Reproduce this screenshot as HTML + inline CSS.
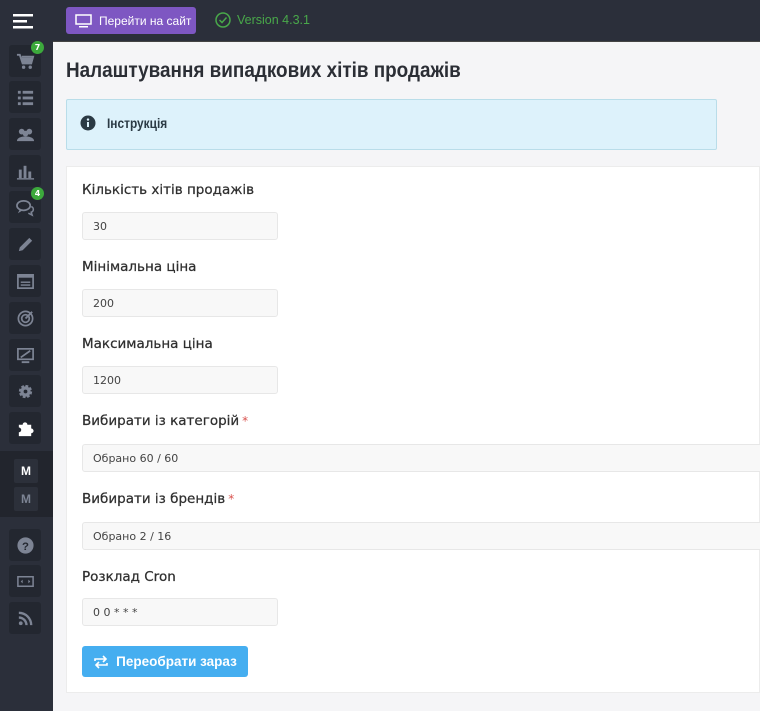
<!DOCTYPE html>
<html><head><meta charset="utf-8"><style>
*{box-sizing:border-box;margin:0;padding:0}
body{width:760px;height:711px;overflow:hidden;background:#f5f5f7;font-family:"DejaVu Sans","Liberation Sans",sans-serif;position:relative}
.side{position:absolute;left:0;top:0;width:53px;height:711px;background:#2b2f3a}
.top{position:absolute;left:53px;top:0;right:0;height:42px;background:#2b2f3a;border-bottom:1px solid #444}
.btn{position:absolute;left:9px;width:32px;height:32px;background:#232730;border-radius:3px;display:flex;align-items:center;justify-content:center}
.btn svg{width:19px;height:19px;fill:#7d8494}
.badge{position:absolute;right:-3px;top:-4px;width:13px;height:13px;border-radius:50%;background:#3ca93c;color:#fff;font-size:8px;font-weight:bold;display:flex;align-items:center;justify-content:center}
.band{position:absolute;left:0;top:451px;width:53px;height:66px;background:#22252d}
.m{position:absolute;left:14px;width:24px;height:24px;background:#2c303a;border-radius:2px;color:#fff;font:bold 12px "Liberation Sans",sans-serif;display:flex;align-items:center;justify-content:center}
h1{position:absolute;left:66px;top:59px;font:bold 21px "Liberation Sans",sans-serif;color:#2b2e35;transform:scaleX(0.9);transform-origin:0 0;white-space:nowrap}
.info{position:absolute;left:66px;top:99px;width:651px;height:51px;background:#ddf2fb;border:1px solid #b9dde9;border-radius:2px}
.card{position:absolute;left:66px;top:166px;right:0;height:527px;background:#fff;border:1px solid #ececec}
.lbl{position:absolute;left:82px;font-size:13.5px;color:#2f2f2f;font-family:"DejaVu Sans",sans-serif;white-space:nowrap;-webkit-text-stroke:0.25px #2f2f2f}
.lbl b{color:#d9534f;font-weight:normal;font-size:12px;margin-left:3px;-webkit-text-stroke:0}
.inp{position:absolute;left:82px;width:196px;height:28px;background:#f8f8f8;border:1px solid #e7e7e7;border-radius:3px;font-size:11px;color:#444;padding:7px 10px;white-space:nowrap}
.wide{width:690px}
.go{position:absolute;left:82px;top:646px;width:166px;height:31px;background:#45aef0;border-radius:3px;color:#fff;font:bold 13.5px "Liberation Sans",sans-serif;display:flex;align-items:center;justify-content:center;gap:7px}
</style></head><body>
<div class="side">
 <svg style="position:absolute;left:13px;top:13px" width="20" height="16" viewBox="0 0 20 16"><rect x="0" y="1" width="20" height="2.5" fill="#fff"/><rect x="0" y="7" width="14" height="2.5" fill="#fff"/><rect x="0" y="13" width="20" height="2.5" fill="#fff"/></svg>
 <div class="btn" style="top:45px"><svg viewBox="0 0 20 20"><path d="M1 3h3l3 9h9l2-7H6" fill="none" stroke="#7d8494" stroke-width="2"/><path d="M6 6h12l-2 6H7z"/><circle cx="8" cy="16" r="1.8"/><circle cx="15" cy="16" r="1.8"/></svg><div class="badge">7</div></div>
 <div class="btn" style="top:81px"><svg viewBox="0 0 20 20"><rect x="2" y="3" width="3" height="3"/><rect x="7" y="3" width="11" height="3"/><rect x="2" y="9" width="3" height="3"/><rect x="7" y="9" width="11" height="3"/><rect x="2" y="15" width="3" height="3"/><rect x="7" y="15" width="11" height="3"/></svg></div>
 <div class="btn" style="top:118px"><svg viewBox="0 0 20 20"><circle cx="6" cy="7" r="3"/><circle cx="14" cy="7" r="3"/><circle cx="10" cy="9" r="3"/><path d="M1 17c0-5 9-5 9-5s9 0 9 5z"/></svg></div>
 <div class="btn" style="top:155px"><svg viewBox="0 0 20 20"><rect x="3" y="8" width="3" height="9"/><rect x="8" y="4" width="3" height="13"/><rect x="13" y="10" width="3" height="7"/><rect x="1" y="17" width="18" height="1.5"/></svg></div>
 <div class="btn" style="top:191px"><svg viewBox="0 0 20 20"><ellipse cx="8" cy="8" rx="7" ry="5" fill="none" stroke="#7d8494" stroke-width="1.8"/><path d="M4 12l-2 4 5-3z"/><path d="M16 9c3 1 3 5 0 6l1 3-4-2" fill="none" stroke="#7d8494" stroke-width="1.6"/></svg><div class="badge">4</div></div>
 <div class="btn" style="top:228px"><svg viewBox="0 0 20 20"><path d="M3 17l1-4L14 3l3 3L7 16z"/></svg></div>
 <div class="btn" style="top:265px"><svg viewBox="0 0 20 20"><rect x="2" y="3" width="16" height="14" fill="none" stroke="#7d8494" stroke-width="1.8"/><rect x="2" y="3" width="16" height="3"/><rect x="5" y="10" width="10" height="1.5"/><rect x="5" y="13" width="10" height="1.5"/></svg></div>
 <div class="btn" style="top:302px"><svg viewBox="0 0 20 20"><circle cx="10" cy="10" r="7.5" fill="none" stroke="#7d8494" stroke-width="1.8"/><circle cx="10" cy="10" r="4" fill="none" stroke="#7d8494" stroke-width="1.8"/><path d="M10 10l7-7" stroke="#7d8494" stroke-width="2"/></svg></div>
 <div class="btn" style="top:339px"><svg viewBox="0 0 20 20"><rect x="2" y="3" width="16" height="11" fill="none" stroke="#7d8494" stroke-width="1.8"/><rect x="6" y="16" width="8" height="2"/><path d="M5 12L15 5" stroke="#7d8494" stroke-width="1.8"/></svg></div>
 <div class="btn" style="top:375px"><svg viewBox="0 0 20 20"><circle cx="10" cy="10" r="5" fill="none" stroke="#7d8494" stroke-width="4" stroke-dasharray="2.5 1.4"/><circle cx="10" cy="10" r="5.5"/><circle cx="10" cy="10" r="2" fill="#232730"/></svg></div>
 <div class="btn" style="top:412px"><svg viewBox="0 0 20 20" style="fill:#fff"><path d="M3 6h4a2.5 2.5 0 1 1 5 0h4v4a2.5 2.5 0 1 1 0 5v3H3v-4a2.5 2.5 0 1 0 0-5z"/></svg></div>
 <div class="band"></div>
 <div class="m" style="top:459px">M</div>
 <div class="m" style="top:487px;color:#7d8494">M</div>
 <div class="btn" style="top:529px"><svg viewBox="0 0 20 20"><circle cx="10" cy="10" r="8.5"/><text x="10" y="14.5" font-size="12" font-weight="bold" text-anchor="middle" fill="#232730" font-family="Liberation Sans">?</text></svg></div>
 <div class="btn" style="top:565px"><svg viewBox="0 0 20 20"><rect x="2" y="5" width="16" height="10" fill="none" stroke="#7d8494" stroke-width="1.6"/><path d="M7 8l-2 2 2 2zM13 8l2 2-2 2z"/></svg></div>
 <div class="btn" style="top:602px"><svg viewBox="0 0 20 20"><circle cx="5" cy="15" r="2"/><path d="M3 9a8 8 0 0 1 8 8M3 4a13 13 0 0 1 13 13" fill="none" stroke="#7d8494" stroke-width="2.5"/></svg></div>
</div>
<div class="top">
 <div style="position:absolute;left:13px;top:7px;width:130px;height:27px;background:#7e57c2;border-radius:3px;color:#fff;font:12px 'Liberation Sans',sans-serif;display:flex;align-items:center;padding-left:9px;gap:7px;white-space:nowrap"><svg width="17" height="14" viewBox="0 0 17 14"><rect x="1" y="1" width="15" height="9" fill="none" stroke="#fff" stroke-width="1.5"/><rect x="4" y="12" width="9" height="1.5" fill="#fff"/></svg>Перейти на сайт</div>
 <div style="position:absolute;left:162px;top:12px;color:#49a84a;font:12.5px 'Liberation Sans',sans-serif;display:flex;align-items:center;gap:6px"><svg width="16" height="16" viewBox="0 0 16 16"><circle cx="8" cy="8" r="7" fill="none" stroke="#49a84a" stroke-width="1.5"/><path d="M4.5 8l2.5 2.5 4.5-5" fill="none" stroke="#49a84a" stroke-width="1.5"/></svg>Version 4.3.1</div>
</div>
<h1>Налаштування випадкових хітів продажів</h1>
<div class="info"><svg style="position:absolute;left:13px;top:15px" width="16" height="16" viewBox="0 0 16 16"><circle cx="8" cy="8" r="7.5" fill="#2b3a44"/><rect x="7" y="7" width="2" height="5" fill="#ddf2fb"/><circle cx="8" cy="4.6" r="1.2" fill="#ddf2fb"/></svg><span style="position:absolute;left:40px;top:15px;font:bold 14px 'Liberation Sans',sans-serif;color:#2b3a44;transform:scaleX(0.85);transform-origin:0 0">Інструкція</span></div>
<div class="card"></div>
<div class="lbl" style="top:182px">Кількість хітів продажів</div>
<div class="inp" style="top:212px">30</div>
<div class="lbl" style="top:259px">Мінімальна ціна</div>
<div class="inp" style="top:289px">200</div>
<div class="lbl" style="top:336px">Максимальна ціна</div>
<div class="inp" style="top:366px">1200</div>
<div class="lbl" style="top:413px">Вибирати із категорій<b>*</b></div>
<div class="inp wide" style="top:444px">Обрано 60 / 60</div>
<div class="lbl" style="top:491px">Вибирати із брендів<b>*</b></div>
<div class="inp wide" style="top:522px">Обрано 2 / 16</div>
<div class="lbl" style="top:569px">Розклад Cron</div>
<div class="inp" style="top:598px">0 0 * * *</div>
<div class="go"><svg width="16" height="14" viewBox="0 0 16 14"><path d="M2 6V4h11M10 1l3 3-3 3M14 8v2H3M6 13l-3-3 3-3" fill="none" stroke="#fff" stroke-width="1.6"/></svg>Переобрати зараз</div>
</body></html>
